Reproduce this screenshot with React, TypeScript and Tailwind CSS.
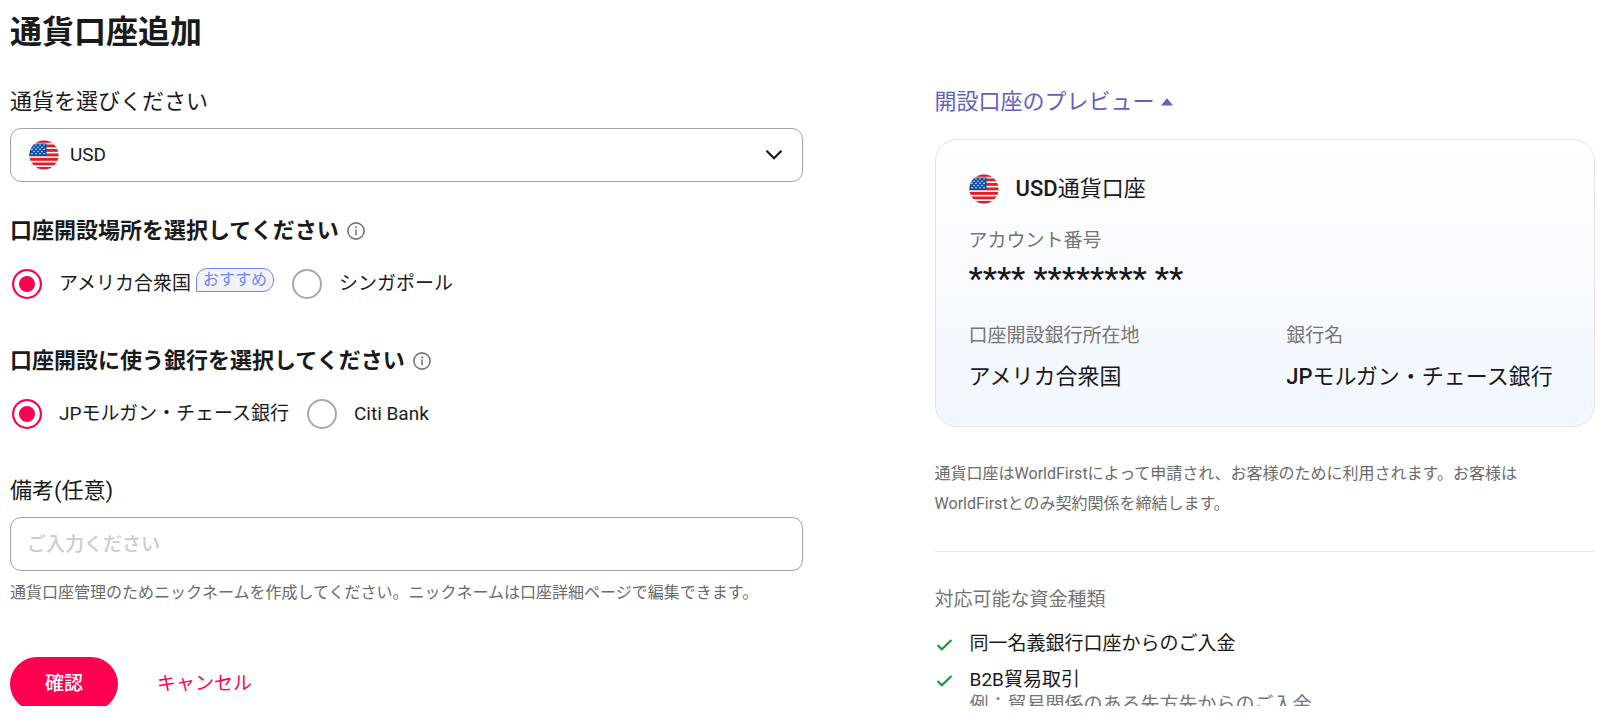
import { useState } from 'react';
import type { ReactNode } from 'react';

const locations = [
  { value: 'us', label: 'アメリカ合衆国', recommended: true },
  { value: 'sg', label: 'シンガポール', recommended: false },
];

const banks = [
  { value: 'jpm', label: 'JPモルガン・チェース銀行', recommended: false },
  { value: 'citi', label: 'Citi Bank', recommended: false },
];

const fundTypes = [
  { title: '同一名義銀行口座からのご入金', example: '' },
  { title: 'B2B貿易取引', example: '例：貿易関係のある先方先からのご入金' },
];

function UsFlag({ className = '' }: { className?: string }) {
  const stripes = [0, 1, 2, 3, 4, 5, 6];
  const stars = [
    [3, 5], [7, 5], [11, 5], [15, 5],
    [5, 7.2], [9, 7.2], [13, 7.2],
    [3, 9.4], [7, 9.4], [11, 9.4], [15, 9.4],
    [5, 11.6], [9, 11.6], [13, 11.6],
    [3, 13.8], [7, 13.8], [11, 13.8], [15, 13.8],
  ];
  return (
    <svg className={className} width="30" height="30" viewBox="0 0 30 30" aria-hidden="true">
      <defs>
        <clipPath id="flag-circle">
          <circle cx="15" cy="15" r="14.5" />
        </clipPath>
      </defs>
      <circle cx="15" cy="15" r="15" fill="#e4e4e8" />
      <g clipPath="url(#flag-circle)">
        <rect width="30" height="30" fill="#f5f5f5" />
        {stripes.map((i) => (
          <rect key={i} y={i * 4.5} width="30" height="2.8" fill="#dc1f26" />
        ))}
        <rect y="3.5" width="17.5" height="12.5" fill="#0b4ea2" />
        {stars.map(([x, y]) => (
          <circle key={`${x}-${y}`} cx={x} cy={y} r="0.8" fill="#e6eefa" />
        ))}
      </g>
    </svg>
  );
}

function InfoIcon() {
  return (
    <svg width="18" height="18" viewBox="0 0 18 18" fill="none" aria-hidden="true">
      <circle cx="9" cy="9" r="8.1" stroke="#777" strokeWidth="1.6" />
      <path d="M9 7.6v5.6" stroke="#777" strokeWidth="1.6" />
      <circle cx="9" cy="5.2" r="1" fill="#777" />
    </svg>
  );
}

function SectionTitle({ children }: { children: ReactNode }) {
  return (
    <legend className="flex items-center gap-2 text-[22px] leading-8 font-bold">
      {children}
      <InfoIcon />
    </legend>
  );
}

type RadioRowProps = {
  name: string;
  options: { value: string; label: string; recommended: boolean }[];
  value: string;
  onChange: (value: string) => void;
};

function RadioRow({ name, options, value, onChange }: RadioRowProps) {
  return (
    <div className="mt-[21px] flex flex-wrap items-center gap-[18px] pl-0.5">
      {options.map((option) => (
        <label key={option.value} className="flex cursor-pointer items-center text-[19px] leading-8">
          <input
            type="radio"
            name={name}
            value={option.value}
            checked={value === option.value}
            onChange={() => onChange(option.value)}
            className="mr-[17px] size-[30px] shrink-0 appearance-none rounded-full border-2 border-[#a8a8a8] bg-white checked:border-[#ff0051] checked:bg-[#ff0051] checked:shadow-[inset_0_0_0_5px_#fff]"
          />
          {option.label}
          {option.recommended && (
            <span className="mb-2 ml-[5px] rounded-[11px] rounded-bl-none border border-[#6a8af5] bg-[#f2f2f7] px-1.5 text-base leading-[22px] text-[#6a8af5]">
              おすすめ
            </span>
          )}
        </label>
      ))}
    </div>
  );
}

export default function App() {
  const [location, setLocation] = useState('us');
  const [bank, setBank] = useState('jpm');
  const [memo, setMemo] = useState('');
  const [previewOpen, setPreviewOpen] = useState(true);

  return (
    <div className="h-screen bg-white pb-[18px] font-[Roboto,'Noto_Sans_CJK_JP',sans-serif] text-[#1a1a1a]">
      <main lang="ja" className="h-full overflow-hidden pr-[11px] pl-2.5">
        <h1 className="pt-2 text-[32px] leading-12 font-bold">通貨口座追加</h1>

        <div className="mt-[30px] flex gap-[132px]">
          <form className="min-w-0 flex-6" onSubmit={(e) => e.preventDefault()}>
            <label htmlFor="currency" className="block text-[22px] leading-8">
              通貨を選びください
            </label>
            <div className="relative mt-2.5">
              <select
                id="currency"
                className="block h-[54px] w-full appearance-none rounded-[11px] border border-[#a3a3a3] bg-white pr-12 pl-[59px] text-[19px]"
              >
                <option>USD</option>
              </select>
              <UsFlag className="pointer-events-none absolute top-3 left-[19px]" />
              <svg
                className="pointer-events-none absolute top-[18px] right-5"
                width="18"
                height="18"
                viewBox="0 0 18 18"
                fill="none"
                aria-hidden="true"
              >
                <path d="M1.5 4.8l7.5 7.5 7.5-7.5" stroke="#1a1a1a" strokeWidth="2.2" />
              </svg>
            </div>

            <fieldset className="mt-[33px]">
              <SectionTitle>口座開設場所を選択してください</SectionTitle>
              <RadioRow name="location" options={locations} value={location} onChange={setLocation} />
            </fieldset>

            <fieldset className="mt-[45px]">
              <SectionTitle>口座開設に使う銀行を選択してください</SectionTitle>
              <RadioRow name="bank" options={banks} value={bank} onChange={setBank} />
            </fieldset>

            <label htmlFor="memo" className="mt-[45px] block text-[22px] leading-8">
              備考(任意)
            </label>
            <input
              id="memo"
              type="text"
              value={memo}
              onChange={(e) => setMemo(e.target.value)}
              placeholder="ご入力ください"
              className="mt-2.5 block h-[54px] w-full rounded-[11px] border border-[#a3a3a3] px-4 text-[19px] placeholder:font-medium placeholder:text-[#ccc]"
            />
            <p className="mt-2 text-base leading-[27px] text-[#6b6b6b]">
              通貨口座管理のためニックネームを作成してください。ニックネームは口座詳細ページで編集できます。
            </p>

            <div className="mt-[51px] flex items-center gap-[39px]">
              <button type="submit" className="h-[54px] w-[108px] rounded-full bg-[#ff0051] text-[19px] font-medium text-white">
                確認
              </button>
              <button type="button" className="text-[19px] text-[#ff0051]">
                キャンセル
              </button>
            </div>
          </form>

          <aside className="min-w-0 flex-5">
            <button
              type="button"
              aria-expanded={previewOpen}
              onClick={() => setPreviewOpen(!previewOpen)}
              className="flex items-center gap-1.5 text-[22px] leading-8 text-[#6161c4]"
            >
              開設口座のプレビュー
              <svg className={previewOpen ? '' : 'rotate-180'} width="12" height="8" viewBox="0 0 12 8" aria-hidden="true">
                <path d="M6 0.3l6 7.2h-12z" fill="#6161c4" />
              </svg>
            </button>

            {previewOpen && (
              <section className="mt-[21px] rounded-[22px] border border-[#e3e4e6] bg-linear-to-b from-white to-[#f1f6ff] p-[33px]">
                <h2 className="flex items-center gap-[17px] text-[22px] leading-8">
                  <UsFlag />
                  <span>
                    <span className="font-medium">USD</span>通貨口座
                  </span>
                </h2>
                <dl>
                  <dt className="mt-[22px] text-[19px] leading-[27px] text-[#757575]">アカウント番号</dt>
                  <dd className="mt-0.5 text-[32px] leading-11 font-medium">**** ******** **</dd>
                </dl>
                <dl className="mt-[22px] grid grid-cols-2 gap-x-[43px]">
                  <div>
                    <dt className="text-[19px] leading-[27px] text-[#757575]">口座開設銀行所在地</dt>
                    <dd className="mt-3 text-[22px] leading-8">アメリカ合衆国</dd>
                  </div>
                  <div>
                    <dt className="text-[19px] leading-[27px] text-[#757575]">銀行名</dt>
                    <dd className="mt-3 text-[22px] leading-8 whitespace-nowrap">
                      <span className="font-medium">JP</span>モルガン・チェース銀行
                    </dd>
                  </div>
                </dl>
              </section>
            )}

            <div className="mt-8 border-b border-[#e3e4e6] pr-4 pb-8">
              <p className="text-base leading-[30px] text-[#6b6b6b]">
                通貨口座はWorldFirstによって申請され、お客様のために利用されます。お客様はWorldFirstとのみ契約関係を締結します。
              </p>
            </div>

            <h3 className="mt-[34px] text-[19px] leading-[27px] text-[#757575]">対応可能な資金種類</h3>
            <ul className="mt-[17px] flex flex-col gap-[9px] text-[19px] leading-[27px]">
              {fundTypes.map((fund) => (
                <li key={fund.title} className="flex gap-[17px]">
                  <svg className="mt-1.5 shrink-0" width="18" height="18" viewBox="0 0 18 18" fill="none" aria-hidden="true">
                    <path d="M2.5 9l4.3 4.3L16.5 4" stroke="#0a9b35" strokeWidth="2" />
                  </svg>
                  <div>
                    {fund.title}
                    {fund.example && <p className="leading-6 text-[#757575]">{fund.example}</p>}
                  </div>
                </li>
              ))}
            </ul>
          </aside>
        </div>
      </main>
    </div>
  );
}
